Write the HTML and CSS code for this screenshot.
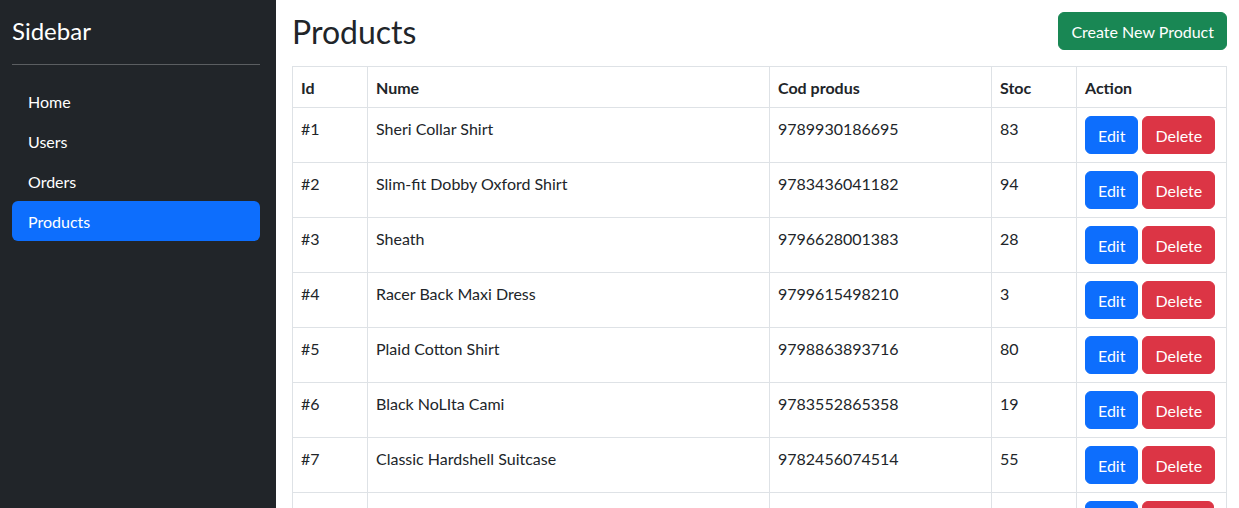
FILE: index.html
```html
<!DOCTYPE html>
<html lang="en">
<head>
<meta charset="utf-8">
<title>Products</title>
<link rel="stylesheet" href="styles.css">
</head>
<body>
<div class="layout">
  <aside class="sidebar">
    <a class="brand" href="#">Sidebar</a>
    <hr class="divider">
    <ul class="nav">
      <li><a class="nav-link" href="#">Home</a></li>
      <li><a class="nav-link" href="#">Users</a></li>
      <li><a class="nav-link" href="#">Orders</a></li>
      <li><a class="nav-link active" href="#">Products</a></li>
    </ul>
  </aside>
  <main class="main">
    <div class="page-header">
      <h2 class="page-title">Products</h2>
      <button class="btn btn-success">Create New Product</button>
    </div>
    <table class="table">
      <colgroup>
        <col class="c-id"><col class="c-name"><col class="c-code"><col class="c-stock"><col class="c-action">
      </colgroup>
      <thead>
        <tr><th>Id</th><th>Nume</th><th>Cod produs</th><th>Stoc</th><th>Action</th></tr>
      </thead>
      <tbody>
        <tr><td>#1</td><td>Sheri Collar Shirt</td><td>9789930186695</td><td>83</td><td class="cell-action"><div class="actions"><button class="btn btn-primary">Edit</button><button class="btn btn-danger">Delete</button></div></td></tr>
        <tr><td>#2</td><td>Slim-fit Dobby Oxford Shirt</td><td>9783436041182</td><td>94</td><td class="cell-action"><div class="actions"><button class="btn btn-primary">Edit</button><button class="btn btn-danger">Delete</button></div></td></tr>
        <tr><td>#3</td><td>Sheath</td><td>9796628001383</td><td>28</td><td class="cell-action"><div class="actions"><button class="btn btn-primary">Edit</button><button class="btn btn-danger">Delete</button></div></td></tr>
        <tr><td>#4</td><td>Racer Back Maxi Dress</td><td>9799615498210</td><td>3</td><td class="cell-action"><div class="actions"><button class="btn btn-primary">Edit</button><button class="btn btn-danger">Delete</button></div></td></tr>
        <tr><td>#5</td><td>Plaid Cotton Shirt</td><td>9798863893716</td><td>80</td><td class="cell-action"><div class="actions"><button class="btn btn-primary">Edit</button><button class="btn btn-danger">Delete</button></div></td></tr>
        <tr><td>#6</td><td>Black NoLIta Cami</td><td>9783552865358</td><td>19</td><td class="cell-action"><div class="actions"><button class="btn btn-primary">Edit</button><button class="btn btn-danger">Delete</button></div></td></tr>
        <tr><td>#7</td><td>Classic Hardshell Suitcase</td><td>9782456074514</td><td>55</td><td class="cell-action"><div class="actions"><button class="btn btn-primary">Edit</button><button class="btn btn-danger">Delete</button></div></td></tr>
        <tr><td></td><td></td><td></td><td></td><td class="cell-action"><div class="actions"><button class="btn btn-primary btn-stub" aria-label="Edit"></button><button class="btn btn-danger btn-stub wide" aria-label="Delete"></button></div></td></tr>
      </tbody>
    </table>
  </main>
</div>
</body>
</html>
```

FILE: styles.css
```css
* { box-sizing: border-box; }

html, body {
  margin: 0;
  padding: 0;
}

body {
  font-family: Lato, "Open Sans", "Noto Sans", sans-serif;
  font-size: 16px;
  line-height: 1.5;
  color: #212529;
  background: #fff;
}

.layout {
  display: flex;
  min-height: 100vh;
}

.sidebar {
  width: 276px;
  flex-shrink: 0;
  background: #212529;
  padding: 12px 16px 12px 12px;
  display: flex;
  flex-direction: column;
  min-height: 100vh;
}

.brand {
  color: #fff;
  text-decoration: none;
  font-size: 24px;
  line-height: 34px;
  padding-top: 2px;
  display: block;
}

.divider {
  border: 0;
  border-top: 1px solid #5b5e61;
  margin: 16px 0;
  height: 0;
}

.nav {
  list-style: none;
  margin: 0;
  padding: 0;
  display: flex;
  flex-direction: column;
}

.nav-link {
  display: block;
  padding: 9px 16px 7px;
  color: #fff;
  text-decoration: none;
  border-radius: 6px;
  line-height: 24px;
}

.nav-link.active {
  background: #0d6efd;
}

.main {
  flex: 1;
  min-width: 0;
  padding: 12px 12px 0 16px;
}

.page-header {
  display: flex;
  justify-content: space-between;
  align-items: flex-start;
  margin-bottom: 16px;
}

.page-title {
  margin: 0;
  font-size: 32px;
  font-weight: 400;
  line-height: 36px;
  padding-top: 2px;
}

.btn {
  font-family: inherit;
  font-size: 16px;
  line-height: 24px;
  padding: 7px 12px 5px;
  border: 1px solid transparent;
  border-radius: 6px;
  color: #fff;
  cursor: pointer;
}

.btn-stub { width: 53px; height: 38px; }
.btn-stub.wide { width: 72px; }

.btn-success { background: #198754; border-color: #198754; }
.btn-primary { background: #0d6efd; border-color: #0d6efd; }
.btn-danger { background: #dc3545; border-color: #dc3545; }

.table {
  width: 100%;
  border-collapse: collapse;
  table-layout: fixed;
}

.c-id { width: 75px; }
.c-name { width: 402px; }
.c-code { width: 222px; }
.c-stock { width: 85px; }
.c-action { width: auto; }

.table th,
.table td {
  border: 1px solid #dee2e6;
  padding: 9px 8px 7px;
  text-align: left;
  vertical-align: top;
  line-height: 24px;
}

.table td.cell-action {
  padding: 8px;
}

.table th {
  font-weight: 700;
}

.actions {
  display: flex;
  gap: 4px;
}
```
